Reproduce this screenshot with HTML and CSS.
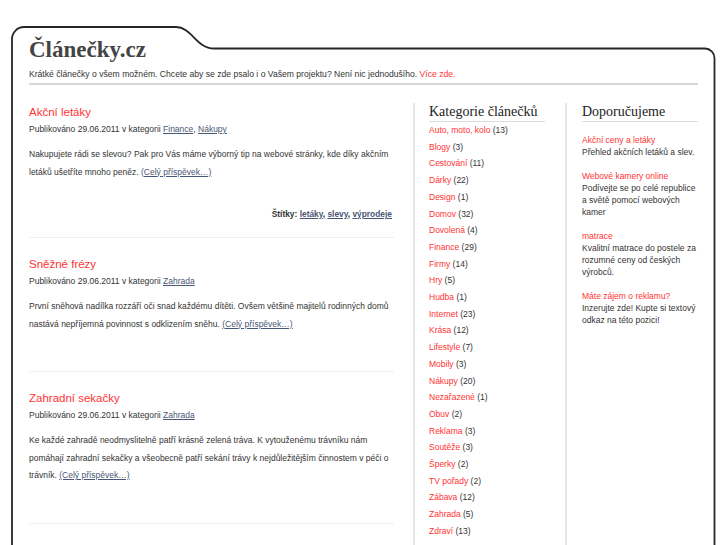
FILE: index.html
```html
<!DOCTYPE html>
<html lang="cs">
<head>
<meta charset="utf-8">
<title>Článečky.cz</title>
<link rel="stylesheet" href="styles.css">
</head>
<body>
<div class="page">
  <svg class="frame" width="705" height="620" viewBox="0 0 705 620" aria-hidden="true">
    <path d="M1,620 V13 A12,12 0 0 1 13,1 H165 C181,1 185,22.5 203,22.5 H694 A9.5,9.5 0 0 1 703.5,32 V620" fill="none" stroke="#262626" stroke-width="1.8"/>
  </svg>
  <header class="masthead">
    <h1 class="site-title">Článečky.cz</h1>
    <p class="tagline">Krátké článečky o všem možném. Chcete aby se zde psalo i o Vašem projektu? Není nic jednodušího. <a href="#" class="red">Více zde.</a></p>
  </header>
  <div class="layout">
    <main class="posts">
      <article class="post">
        <h2 class="post-title"><a href="#">Akční letáky</a></h2>
        <p class="meta">Publikováno 29.06.2011 v kategorii <a href="#">Finance</a>, <a href="#">Nákupy</a></p>
        <p class="excerpt">Nakupujete rádi se slevou? Pak pro Vás máme výborný tip na webové stránky, kde díky akčním letáků ušetříte mnoho peněz. <a href="#" class="more">(Celý příspěvek…)</a></p>
        <p class="tags"><strong>Štítky:</strong> <a href="#">letáky</a>, <a href="#">slevy</a>, <a href="#">výprodeje</a></p>
      </article>
      <article class="post">
        <h2 class="post-title"><a href="#">Sněžné frézy</a></h2>
        <p class="meta">Publikováno 29.06.2011 v kategorii <a href="#">Zahrada</a></p>
        <p class="excerpt">První sněhová nadílka rozzáří oči snad každému dítěti. Ovšem většině majitelů rodinných domů nastává nepříjemná povinnost s odklizením sněhu. <a href="#" class="more">(Celý příspěvek…)</a></p>
        <p class="tags"></p>
      </article>
      <article class="post">
        <h2 class="post-title"><a href="#">Zahradní sekačky</a></h2>
        <p class="meta">Publikováno 29.06.2011 v kategorii <a href="#">Zahrada</a></p>
        <p class="excerpt">Ke každé zahradě neodmyslitelně patří krásně zelená tráva. K vytouženému trávníku nám pomáhají zahradní sekačky a všeobecně patří sekání trávy k nejdůležitějším činnostem v péči o trávník. <a href="#" class="more">(Celý příspěvek…)</a></p>
        <p class="tags"></p>
      </article>
    </main>
    <aside class="sidebar categories">
      <h3 class="widget-title">Kategorie článečků</h3>
      <ul class="cat-list">
        <li><a href="#">Auto, moto, kolo</a> (13)</li>
        <li><a href="#">Blogy</a> (3)</li>
        <li><a href="#">Cestování</a> (11)</li>
        <li><a href="#">Dárky</a> (22)</li>
        <li><a href="#">Design</a> (1)</li>
        <li><a href="#">Domov</a> (32)</li>
        <li><a href="#">Dovolená</a> (4)</li>
        <li><a href="#">Finance</a> (29)</li>
        <li><a href="#">Firmy</a> (14)</li>
        <li><a href="#">Hry</a> (5)</li>
        <li><a href="#">Hudba</a> (1)</li>
        <li><a href="#">Internet</a> (23)</li>
        <li><a href="#">Krása</a> (12)</li>
        <li><a href="#">Lifestyle</a> (7)</li>
        <li><a href="#">Mobily</a> (3)</li>
        <li><a href="#">Nákupy</a> (20)</li>
        <li><a href="#">Nezařazené</a> (1)</li>
        <li><a href="#">Obuv</a> (2)</li>
        <li><a href="#">Reklama</a> (3)</li>
        <li><a href="#">Soutěže</a> (3)</li>
        <li><a href="#">Šperky</a> (2)</li>
        <li><a href="#">TV pořady</a> (2)</li>
        <li><a href="#">Zábava</a> (12)</li>
        <li><a href="#">Zahrada</a> (5)</li>
        <li><a href="#">Zdraví</a> (13)</li>
      </ul>
    </aside>
    <aside class="sidebar recommend">
      <h3 class="widget-title">Doporučujeme</h3>
      <div class="rec">
        <a href="#">Akční ceny a letáky</a>
        <p>Přehled akčních letáků a slev.</p>
      </div>
      <div class="rec">
        <a href="#">Webové kamery online</a>
        <p>Podívejte se po celé republice a světě pomocí webových kamer</p>
      </div>
      <div class="rec">
        <a href="#">matrace</a>
        <p>Kvalitní matrace do postele za rozumné ceny od českých výrobců.</p>
      </div>
      <div class="rec">
        <a href="#">Máte zájem o reklamu?</a>
        <p>Inzerujte zde! Kupte si textový odkaz na této pozici!</p>
      </div>
    </aside>
  </div>
</div>
</body>
</html>
```

FILE: styles.css
```css
html, body {
  margin: 0;
  padding: 0;
  background: #fff;
  overflow: hidden;
}
body {
  font-family: "Liberation Sans", Arial, sans-serif;
  font-size: 8.5px;
  color: #333;
}
a { color: inherit; }
p, h1, h2, h3, ul { margin: 0; padding: 0; }

.page {
  position: relative;
  width: 705px;
  margin: 26px 0 0 11px;
  padding: 10px 0 0 18px;
  box-sizing: border-box;
}
.frame {
  position: absolute;
  left: 0;
  top: 0;
  pointer-events: none;
}

.masthead {
  width: 669px;
  padding-bottom: 3px;
  border-bottom: 2px solid #d6d6d6;
}
.site-title {
  font-family: "Liberation Serif", "Times New Roman", serif;
  font-weight: bold;
  font-size: 23px;
  line-height: 28px;
  color: #444;
}
.tagline {
  margin-top: 4px;
  font-size: 8.6px;
  line-height: 12px;
  color: #333;
}
.red, .tagline a { color: #ff3333; text-decoration: none; }

.layout {
  display: flex;
  align-items: stretch;
  margin-top: 18px;
}

.posts {
  width: 365px;
  flex: none;
  margin-right: 19px;
}
.post {
  padding-bottom: 14px;
  margin-bottom: 17px;
  border-bottom: 1px solid #f0f0f0;
}
.post-title {
  font-size: 11.5px;
  font-weight: normal;
  line-height: 18px;
}
.post-title a { color: #ff3333; text-decoration: none; }
.meta {
  line-height: 16px;
  color: #333;
}
.meta a, .more, .tags a { color: #4a5675; }
.excerpt {
  margin-top: 9px;
  line-height: 17.5px;
}
.tags {
  margin-top: 24px;
  padding-right: 2px;
  text-align: right;
  font-size: 8.4px;
  line-height: 18px;
  font-weight: bold;
}

.sidebar {
  flex: none;
  box-sizing: border-box;
  border-left: 2px solid #e6e6e6;
  min-height: 460px;
}
.categories {
  width: 152px;
  padding: 0 20px 0 14px;
}
.recommend {
  width: 151px;
  padding: 0 18px 0 15px;
}
.widget-title {
  font-family: "Liberation Serif", "Times New Roman", serif;
  font-weight: normal;
  font-size: 14px;
  line-height: 18px;
  color: #222;
  border-bottom: 1px solid #dcdcdc;
}
.cat-list {
  list-style: none;
  line-height: 16.7px;
}
.cat-list a { color: #ff3333; text-decoration: none; }

.recommend .widget-title { margin-bottom: 12px; }
.rec {
  line-height: 12px;
  margin-bottom: 12px;
}
.rec a { color: #ff3333; text-decoration: none; }
```
